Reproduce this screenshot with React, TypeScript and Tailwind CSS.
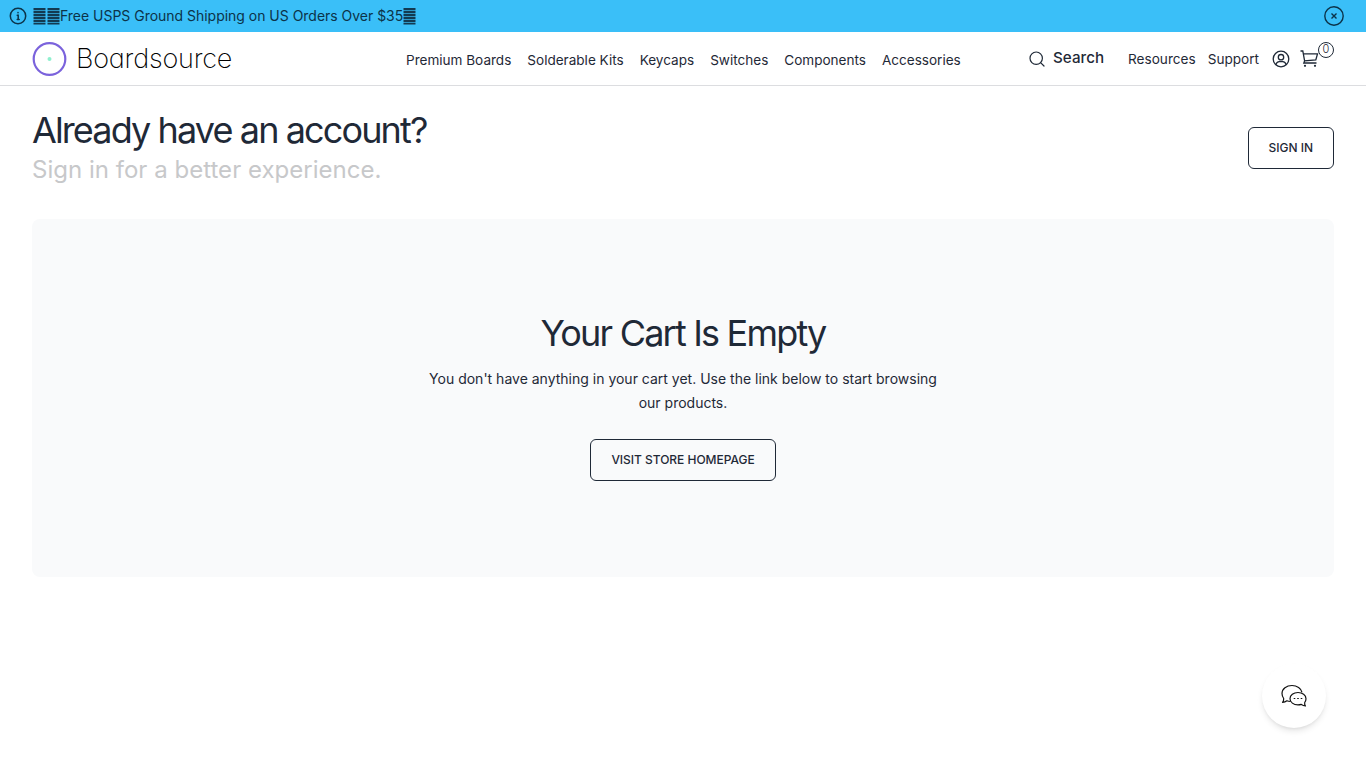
import React from "react"

const NAV_LINKS = [
  "Premium Boards",
  "Solderable Kits",
  "Keycaps",
  "Switches",
  "Components",
  "Accessories"
]

function Bars() {
  return (
    <svg width="13" height="18" viewBox="0 0 13 18" className="shrink-0 text-[#123a52]" fill="currentColor">
      <rect x="0.5" y="1" width="12" height="2.3" />
      <rect x="0.5" y="4" width="12" height="2.3" />
      <rect x="0.5" y="7" width="12" height="2.3" />
      <rect x="0.5" y="10" width="12" height="2.3" />
      <rect x="0.5" y="13" width="12" height="2.3" />
      <rect x="0.5" y="16" width="12" height="1.5" />
    </svg>
  )
}

function Banner() {
  return (
    <div className="flex h-8 items-center bg-[#3abff8] pl-2 pr-[22px] text-[#0c3349]">
      <svg width="20" height="20" viewBox="0 0 20 20" fill="none" stroke="currentColor" strokeWidth="1.5" strokeLinecap="round">
        <circle cx="10" cy="10" r="7.7" />
        <path d="M9.2 9.3h1v4.2M9.2 13.5h2M10 6.6v.1" />
      </svg>
      <div className="ml-[5px] flex items-center">
        <Bars />
        <span className="w-px" />
        <Bars />
      </div>
      <span className="text-sm tracking-[-0.02px]">Free USPS Ground Shipping on US Orders Over $35</span>
      <Bars />
      <button className="ml-auto" aria-label="Dismiss">
        <svg width="20" height="20" viewBox="0 0 20 20" fill="none" stroke="currentColor" strokeWidth="1.4">
          <circle cx="10" cy="10" r="9.2" />
          <path d="M7.5 7.5l5 5M12.5 7.5l-5 5" />
        </svg>
      </button>
    </div>
  )
}

function Logo() {
  return (
    <a className="flex w-[220px] items-center gap-[9px]">
      <svg width="35" height="34" viewBox="0 0 35 34">
        <circle cx="17.5" cy="17" r="15.8" fill="none" stroke="#7b63dc" strokeWidth="2.2" />
        <circle cx="17.5" cy="17" r="2" fill="#8ff0cf" />
      </svg>
      <span className="pt-px text-[27px] font-extralight leading-[34px] tracking-[-0.2px] text-black [font-feature-settings:'cv11']">
        Boardsource
      </span>
    </a>
  )
}

function Header() {
  return (
    <header className="flex h-[54px] items-center border-b border-[#dcdde0] px-8">
      <Logo />
      <nav className="ml-[154px] flex gap-4 pt-0.5 text-[13.55px] leading-5">
        {NAV_LINKS.map((label) => (
          <a key={label}>{label}</a>
        ))}
      </nav>
      <div className="ml-auto flex items-center">
        <svg width="16" height="16" viewBox="0 0 16 16" fill="none" stroke="currentColor" strokeWidth="1.2" strokeLinecap="round">
          <circle cx="7.2" cy="7.2" r="6.2" />
          <path d="M11.8 11.8L15 15" />
        </svg>
        <span className="-mt-px ml-2 text-[15.2px] font-medium leading-6">Search</span>
        <span className="ml-6 text-[13.6px] leading-5">Resources</span>
        <span className="ml-3 text-[13.6px] leading-5">Support</span>
        <svg className="ml-3" width="20" height="20" viewBox="0 0 20 20" fill="none" stroke="currentColor" strokeWidth="1.3">
          <circle cx="10" cy="10" r="7.8" />
          <circle cx="10" cy="8.2" r="2.7" />
          <path d="M4.8 15.8c.6-2 1.8-3.2 3.4-3.2h3.6c1.6 0 2.8 1.2 3.4 3.2" />
        </svg>
        <div className="relative ml-[9px] mr-[14px]">
          <svg width="20" height="20" viewBox="0 0 20 20" fill="none" stroke="currentColor" strokeWidth="1.3">
            <path d="M.5 2h2.3l1.8 9.8M3.2 4.8h14.3l-1.7 6.2-11.2.8-.8 2.2h12.7" />
            <circle cx="5" cy="16.8" r="1.1" fill="currentColor" stroke="none" />
            <circle cx="15" cy="16.8" r="1.1" fill="currentColor" stroke="none" />
          </svg>
          <span className="absolute -top-[7px] left-[18px] flex h-4 w-4 items-center justify-center rounded-full border border-[#1f2937] text-[11px] font-light">
            0
          </span>
        </div>
      </div>
    </header>
  )
}

function OutlineButton({ children }: { children: React.ReactNode }) {
  return (
    <button className="h-[42px] rounded-[6px] border border-[#1f2937] px-5 text-xs font-medium uppercase tracking-[-0.03px]">
      {children}
    </button>
  )
}

export default function App() {
  return (
    <div className="min-h-screen bg-white font-[Inter,sans-serif] text-[#1f2937]">
      <Banner />
      <Header />
      <main className="px-8">
        <section className="flex h-[133px] items-center justify-between pb-[9px]">
          <div className="pt-[3px]">
            <h1 className="text-4xl leading-10 tracking-[-1.88px]">Already have an account?</h1>
            <p className="text-2xl leading-[39px] tracking-[0.02px] text-[#c7c8ca]">Sign in for a better experience.</p>
          </div>
          <OutlineButton>Sign in</OutlineButton>
        </section>
        <section className="flex h-[358px] flex-col items-center rounded-lg bg-[#f9fafb] pt-[94px]">
          <h2 className="text-4xl leading-10 tracking-tighter">Your Cart Is Empty</h2>
          <p className="mb-6 mt-[14px] w-[520px] text-center text-sm leading-6">
            You don't have anything in your cart yet. Use the link below to start browsing our products.
          </p>
          <OutlineButton>Visit store homepage</OutlineButton>
        </section>
      </main>
      <button
        aria-label="Chat"
        className="fixed bottom-10 right-10 flex h-16 w-16 items-center justify-center rounded-full bg-white shadow-md"
      >
        <svg width="26" height="24" viewBox="0 0 26 24" fill="none" stroke="#111" strokeWidth="1.2" strokeLinejoin="round">
          <path d="M9.5 17.5c-1.3 0-2.5-.2-3.6-.7-1.2 1-2.6 1.5-4.4 1.5 1-1 1.3-2.4 1.2-3.8C1.5 13 1 11.3 1 9.6 1 5 5.5 1.5 11 1.5c5 0 9.3 2.9 10 6.9" />
          <path d="M17 8.5c-4.5 0-8 2.7-8 6.2s3.5 6.2 8 6.2c1.2 0 2.3-.2 3.3-.5 1.1 1 2.6 1.6 4.2 1.6-.8-1-1-2.3-.8-3.5.8-1.1 1.3-2.4 1.3-3.8 0-3.5-3.6-6.2-8-6.2z" />
          <path d="M12.7 14.5h1.6M16.2 14.5h1.6M19.7 14.5h1.6" />
        </svg>
      </button>
    </div>
  )
}
